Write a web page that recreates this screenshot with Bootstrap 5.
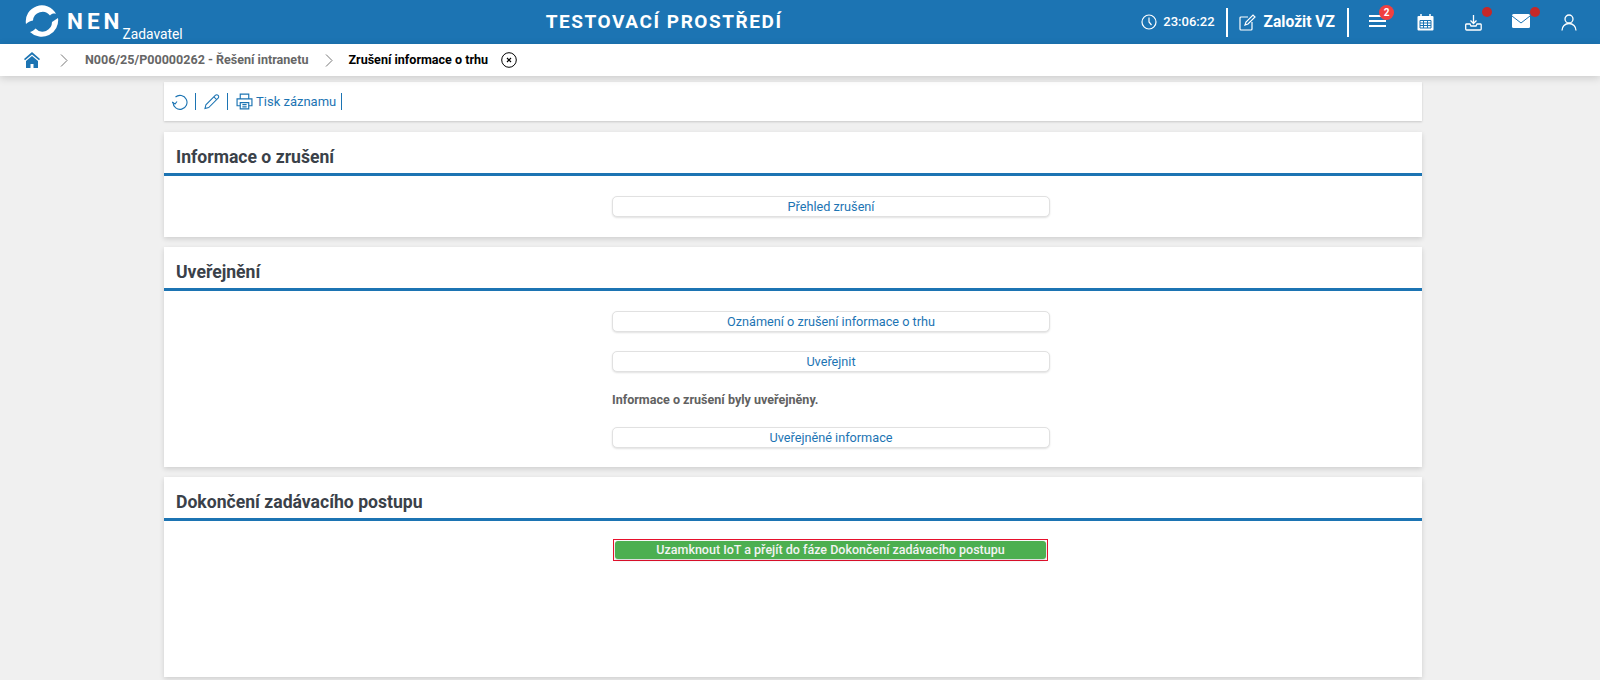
<!DOCTYPE html>
<html lang="cs">
<head>
<meta charset="utf-8">
<title>NEN</title>
<link href="https://cdn.jsdelivr.net/npm/bootstrap@5.3.0/dist/css/bootstrap.min.css" rel="stylesheet">
<style>
html,body{height:680px;overflow:hidden}
body{background:#f0f0f0;font-family:Roboto,"Liberation Sans",sans-serif;font-size:13px;color:#555}
.top-bar{height:44px;background:#1c74b3;color:#fff;padding-left:25px}
.brand-area{width:400px}
.logo-word{font-size:22.5px;font-weight:700;letter-spacing:4px;line-height:1;margin-left:8px;margin-top:-2px}
.logo-role{font-size:13.8px;line-height:1;align-self:flex-end;margin-left:-1px;margin-bottom:2px}
.env-title{flex:1;text-align:center;font-size:19px;font-weight:700;letter-spacing:1.55px;padding-right:238px}
.clock{font-size:13px;font-weight:500;margin-right:11px;margin-left:6px}
.vbar{width:2px;height:29px;background:#fff}
.pen-ico{margin-left:11px}
.new-vz{font-size:15.6px;font-weight:700;margin:1px 12px 0 8px}
.tool-row{margin-left:4px;margin-right:7px}
.tool-slot{position:relative;width:48px;display:flex;justify-content:center}
.count-pill{position:absolute;top:-9px;left:26px;width:15px;height:15px;border-radius:50%;background:#f04040;color:#fff;font-size:10px;font-weight:700;line-height:15px;text-align:center}
.dot-red{position:absolute;top:-7px;left:33px;width:10px;height:10px;border-radius:50%;background:#c62828}
.crumb-bar{height:32px;background:#fff;box-shadow:0 2px 8px rgba(0,0,0,.16);padding-left:24px;position:relative}
.crumb-link{font-weight:700;color:#666;font-size:12.55px;margin-left:17px}
.crumb-now{font-weight:700;color:#000;font-size:12.55px;margin-left:15px}
.chev-a{margin-left:20px}
.chev-b{margin-left:17px}
.close-ico{margin-left:13px}
.page-wrap{width:1258px;margin:6px auto 0 164px}
.tool-card{height:39px;background:#fff;box-shadow:0 1px 2px rgba(0,0,0,.16);padding:0 0 0 8px;color:#1c74b3}
.tool-sep{width:1px;height:17px;background:#1c74b3;margin:0 8px 0 7px}
.tool-label{margin-left:3px;margin-right:-2px;color:#1c74b3}
.sec-card{background:#fff;box-shadow:0 2px 5px rgba(0,0,0,.14);margin-top:11px}
.sec-title{font-size:17.6px;font-weight:700;color:#3a4149;line-height:21px;padding:15px 12px 5px;border-bottom:3px solid #1c74b3;height:44px}
.act-col{width:438px;margin-left:448px}
.act-btn{display:block;width:100%;height:21px;padding:0;line-height:19px;text-align:center;background:#fff;border:1px solid #e1e1e1;border-radius:5px;box-shadow:0 1px 2px rgba(0,0,0,.12);color:#1c74b3;font-size:12.7px}
.act-note{font-weight:700;color:#616161;font-size:12.55px;line-height:16px;margin-top:20px}
.go-frame{width:435px;margin-left:449px;margin-top:18px;border:1px solid #e8112d;padding:1px}
.go-btn{display:block;width:100%;height:18px;padding:0;line-height:18px;border:0;border-radius:3px;background:#4caf50;color:#f3f3f3;font-weight:500;font-size:12.5px;text-align:center;box-shadow:0 1px 3px rgba(0,0,0,.2)}
.s1{height:105px}.s2{height:220px;margin-top:10px}.s3{height:200px;margin-top:10px}
.pt1{padding-top:20px}.mt-a{margin-top:20px}.mt-b{margin-top:19px}.mt-d{margin-top:19px}
</style>
</head>
<body>
<header class="top-bar d-flex align-items-center">
  <div class="brand-area d-flex align-items-center h-100">
    <svg width="34" height="34" viewBox="0 0 34 34" aria-hidden="true">
      <path fill="#fff" d="M1 19A16 16 0 0 1 31 9C29 8 27 8.500 25 10.500A9.500 9.500 0 0 0 8 15.500C5 16 3 17 1 19Z"/>
      <path fill="#fff" d="M33 13A16.500 16.500 0 0 1 5 27C7 26.500 9 25.500 10.500 23.500A9.500 9.500 0 0 0 27 17C29 16 31 14 33 13Z"/>
    </svg>
    <span class="logo-word">NEN</span>
    <span class="logo-role">Zadavatel</span>
  </div>
  <div class="env-title">TESTOVACÍ PROSTŘEDÍ</div>
  <div class="d-flex align-items-center">
    <svg width="16" height="16" viewBox="0 0 16 16" fill="none" stroke="#fff" stroke-width="1.200"><circle cx="8" cy="8" r="7"/><path d="M8 3.500V8l2.500 3"/></svg>
    <span class="clock">23:06:22</span>
    <span class="vbar"></span>
    <svg class="pen-ico" width="17" height="17" viewBox="0 0 17 17" fill="none" stroke="#fff" stroke-width="1.200"><path d="M9 3H2a1 1 0 0 0-1 1v11a1 1 0 0 0 1 1h10a1 1 0 0 0 1-1V8"/><path d="M6 11l1-3 7-7 2 2-7 7z"/></svg>
    <span class="new-vz">Založit VZ</span>
    <span class="vbar"></span>
    <div class="d-flex tool-row">
      <div class="tool-slot">
        <svg width="17" height="14" viewBox="0 0 17 14" fill="none" stroke="#fff" stroke-width="2"><path d="M0 2h17M0 7h17M0 12h17"/></svg>
        <span class="count-pill">2</span>
      </div>
      <div class="tool-slot">
        <svg width="17" height="17" viewBox="0 0 17 17"><rect x=".5" y="2" width="16" height="14.500" rx="1" fill="#fff"/><path d="M4 0v3M13 0v3" stroke="#fff" stroke-width="1.500"/><path d="M3 6.500h11v7.500H3zM3 9h11M3 11.500h11M6.500 6.500V14M10.500 6.500V14" fill="none" stroke="#1c74b3"/></svg>
      </div>
      <div class="tool-slot">
        <svg width="17" height="17" viewBox="0 0 17 17" fill="none" stroke="#fff" stroke-width="1.300"><path d="M8.500 1v8M5.500 6.500l3 3 3-3"/><path d="M5 10H1.500a1 1 0 0 0-.8.700V15a1 1 0 0 0 1 1h13.500a1 1 0 0 0 1-1v-4.300a1 1 0 0 0-.8-.7H12l-1 2H6z"/></svg>
        <span class="dot-red"></span>
      </div>
      <div class="tool-slot">
        <svg width="18" height="14" viewBox="0 0 18 14"><rect width="18" height="14" rx="1.500" fill="#fff"/><path d="M0 2l9 7 9-7" fill="none" stroke="#1c74b3" stroke-width="1"/></svg>
        <span class="dot-red"></span>
      </div>
      <div class="tool-slot">
        <svg width="16" height="17" viewBox="0 0 16 17" fill="none" stroke="#fff" stroke-width="1.300"><circle cx="8" cy="5" r="4"/><path d="M1 16.500c0-4 3-7 7-7s7 3 7 7"/></svg>
      </div>
    </div>
  </div>
</header>
<nav class="crumb-bar d-flex align-items-center" aria-label="drobečky">
  <svg width="16" height="16" viewBox="0 0 16 16" aria-hidden="true"><path d="M8 0L0 7l1 1.200L8 2.400l7 5.800L16 7z" fill="#1c74b3"/><path d="M8 4L2 9v7h4.500v-4h3v4H14V9z" fill="#1c74b3"/></svg>
  <svg class="chev-a" width="8" height="13" viewBox="0 0 8 13" fill="none" stroke="#777"><path d="M1 .5l6 6-6 6"/></svg>
  <span class="crumb-link">N006/25/P00000262 - Řešení intranetu</span>
  <svg class="chev-b" width="8" height="13" viewBox="0 0 8 13" fill="none" stroke="#777"><path d="M1 .5l6 6-6 6"/></svg>
  <span class="crumb-now">Zrušení informace o trhu</span>
  <svg class="close-ico" width="16" height="16" viewBox="0 0 16 16" fill="none" stroke="#000"><circle cx="8" cy="8" r="7.300"/><path d="M6 6l4 4M10 6l-4 4" stroke-width="1.200"/></svg>
</nav>
<main class="page-wrap">
  <div class="tool-card d-flex align-items-center">
    <svg width="16" height="16" viewBox="0 0 16 16" fill="none" stroke="#1c74b3" stroke-width="1.100"><path d="M3.500 3A7 7 0 1 1 1 8.500"/><path d="M0 8l3 2 2-2.500"/></svg>
    <span class="tool-sep"></span>
    <svg width="16" height="17" viewBox="0 0 17 17" fill="none" stroke="#1c74b3" stroke-width="1.100"><path d="M1 16l1-4L12 2a2 2 0 0 1 3 3L5 15z"/><path d="M10.500 3.500l3 3"/></svg>
    <span class="tool-sep"></span>
    <svg width="17" height="17" viewBox="0 0 16 16" fill="none" stroke="#1c74b3" stroke-width="1.100"><path d="M4 5V1h8v4M4 12H1V5.500h14V12h-3"/><path d="M4 9h8v6H4zM6 11h4M6 13h4"/></svg>
    <span class="tool-label">Tisk záznamu</span>
    <span class="tool-sep"></span>
  </div>
  <section class="sec-card s1">
    <h2 class="sec-title m-0">Informace o zrušení</h2>
    <div class="act-col pt1"><a class="act-btn text-decoration-none" href="#">Přehled zrušení</a></div>
  </section>
  <section class="sec-card s2">
    <h2 class="sec-title m-0">Uveřejnění</h2>
    <div class="act-col">
      <a class="act-btn text-decoration-none mt-a" href="#">Oznámení o zrušení informace o trhu</a>
      <a class="act-btn text-decoration-none mt-b" href="#">Uveřejnit</a>
      <p class="act-note mb-0">Informace o zrušení byly uveřejněny.</p>
      <a class="act-btn text-decoration-none mt-d" href="#">Uveřejněné informace</a>
    </div>
  </section>
  <section class="sec-card s3">
    <h2 class="sec-title m-0">Dokončení zadávacího postupu</h2>
    <div class="go-frame"><a class="go-btn text-decoration-none" href="#">Uzamknout IoT a přejít do fáze Dokončení zadávacího postupu</a></div>
  </section>
</main>
</body>
</html>
